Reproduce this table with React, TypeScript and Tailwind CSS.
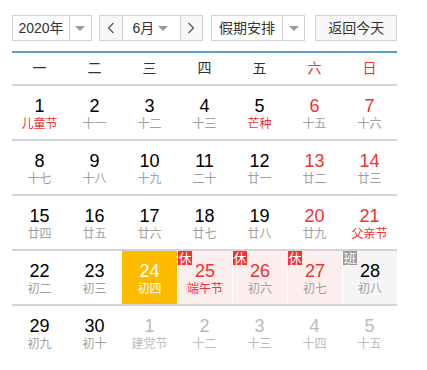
import React from "react";

type Day = {
  d: number;
  lunar: string;
  red?: boolean;
  fest?: boolean;
  other?: boolean;
  today?: boolean;
  rest?: boolean;
  work?: boolean;
};

const weekdays = ["一", "二", "三", "四", "五", "六", "日"];

const days: Day[] = [
  { d: 1, lunar: "儿童节", fest: true },
  { d: 2, lunar: "十一" },
  { d: 3, lunar: "十二" },
  { d: 4, lunar: "十三" },
  { d: 5, lunar: "芒种", fest: true },
  { d: 6, lunar: "十五", red: true },
  { d: 7, lunar: "十六", red: true },
  { d: 8, lunar: "十七" },
  { d: 9, lunar: "十八" },
  { d: 10, lunar: "十九" },
  { d: 11, lunar: "二十" },
  { d: 12, lunar: "廿一" },
  { d: 13, lunar: "廿二", red: true },
  { d: 14, lunar: "廿三", red: true },
  { d: 15, lunar: "廿四" },
  { d: 16, lunar: "廿五" },
  { d: 17, lunar: "廿六" },
  { d: 18, lunar: "廿七" },
  { d: 19, lunar: "廿八" },
  { d: 20, lunar: "廿九", red: true },
  { d: 21, lunar: "父亲节", red: true, fest: true },
  { d: 22, lunar: "初二" },
  { d: 23, lunar: "初三" },
  { d: 24, lunar: "初四", today: true },
  { d: 25, lunar: "端午节", red: true, fest: true, rest: true },
  { d: 26, lunar: "初六", red: true, rest: true },
  { d: 27, lunar: "初七", red: true, rest: true },
  { d: 28, lunar: "初八", work: true },
  { d: 29, lunar: "初九" },
  { d: 30, lunar: "初十" },
  { d: 1, lunar: "建党节", other: true },
  { d: 2, lunar: "十二", other: true },
  { d: 3, lunar: "十三", other: true },
  { d: 4, lunar: "十四", other: true },
  { d: 5, lunar: "十五", other: true },
];

function Arrow() {
  return <span className="h-0 w-0 border-x-[5px] border-t-[5px] border-x-transparent border-t-[#999]" />;
}

function Cell({ day, first }: { day: Day; first: boolean }) {
  let bg = "";
  let num = "text-black";
  let sub = "text-[#a0a0a0]";
  if (day.red) num = "text-[#f03030]";
  if (day.fest) sub = "text-[#f03030]";
  if (day.other) {
    num = "text-[#bbbbbb]";
    sub = "text-[#bbbbbb]";
  }
  if (day.today) {
    bg = "bg-[#ffbb00]";
    num = "text-white";
    sub = "text-white";
  }
  if (day.rest) bg = "bg-[#fdeeee]";
  if (day.work) bg = "bg-[#f5f5f5]";
  return (
    <div
      className={`relative flex h-[53px] flex-col items-center ${bg} ${
        !first && (day.rest || day.work) ? "border-l border-white" : ""
      }`}
    >
      {(day.rest || day.work) && (
        <span
          className={`absolute left-0 top-0 flex h-[14px] w-[14px] items-center justify-center text-[13px] leading-none text-white ${
            day.rest ? "bg-[#f73131]" : "bg-[#999999]"
          }`}
        >
          {day.rest ? "休" : "班"}
        </span>
      )}
      <span className={`mt-[9px] text-[18px] leading-[22px] ${num}`}>{day.d}</span>
      <span className={`text-[12px] leading-[14px] ${sub}`}>{day.lunar}</span>
    </div>
  );
}

export default function App() {
  const rows: Day[][] = [];
  for (let i = 0; i < days.length; i += 7) rows.push(days.slice(i, i + 7));

  return (
    <div
      className="h-[370px] w-[427px] bg-white pl-[12px] pt-[15px] text-[#333]"
      style={{ fontFamily: '"Liberation Sans", Arial, "Noto Sans CJK SC", sans-serif' }}
    >
      <div className="flex h-[26px] w-[385px] items-stretch text-[14px]">
        <div className="flex w-[80px] border border-[#d4d4d4]">
          <span className="flex w-[56px] items-center justify-center">2020年</span>
          <span className="flex flex-1 items-center justify-center border-l border-[#d4d4d4]">
            <Arrow />
          </span>
        </div>
        <div className="ml-[7px] flex w-[105px] border border-[#d4d4d4]">
          <span className="flex w-[22px] items-center justify-center bg-[#f7f7f7] text-[#666]">
            <svg width="8" height="12" viewBox="0 0 8 12" fill="none" stroke="#555" strokeWidth="1.2">
              <path d="M6.5 1 L1.5 6 L6.5 11" />
            </svg>
          </span>
          <span className="flex flex-1 items-center border-l border-[#d4d4d4] pl-[10px]">
            <span className="flex-1">6月</span>
            <span className="mr-[12px] flex items-center">
              <Arrow />
            </span>
          </span>
          <span className="flex w-[22px] items-center justify-center border-l border-[#d4d4d4] bg-[#f7f7f7]">
            <svg width="8" height="12" viewBox="0 0 8 12" fill="none" stroke="#555" strokeWidth="1.2">
              <path d="M1.5 1 L6.5 6 L1.5 11" />
            </svg>
          </span>
        </div>
        <div className="ml-[8px] flex w-[95px] border border-[#d4d4d4]">
          <span className="flex w-[70px] items-center justify-center">假期安排</span>
          <span className="flex flex-1 items-center justify-center border-l border-[#d4d4d4]">
            <Arrow />
          </span>
        </div>
        <button className="ml-[10px] flex w-[82px] items-center justify-center border border-[#d4d4d4] bg-[#f7f7f7] text-[14px] text-[#333]">
          返回今天
        </button>
      </div>

      <div className="mt-[10px] w-[385px] border-t-2 border-[#5b9bd5]">
        <div className="grid h-[33px] grid-cols-7 items-center border-b-2 border-[#d4d4d4] text-[14px]">
          {weekdays.map((w, i) => (
            <span key={w} className={`text-center ${i >= 5 ? "text-[#f03030]" : "text-[#333]"}`}>
              {w}
            </span>
          ))}
        </div>
        {rows.map((row, r) => (
          <div
            key={r}
            className={`grid grid-cols-7 ${r < rows.length - 1 ? "border-b-2 border-[#d4d4d4]" : ""}`}
          >
            {row.map((day, i) => (
              <Cell key={i} day={day} first={i === 0} />
            ))}
          </div>
        ))}
      </div>
    </div>
  );
}
